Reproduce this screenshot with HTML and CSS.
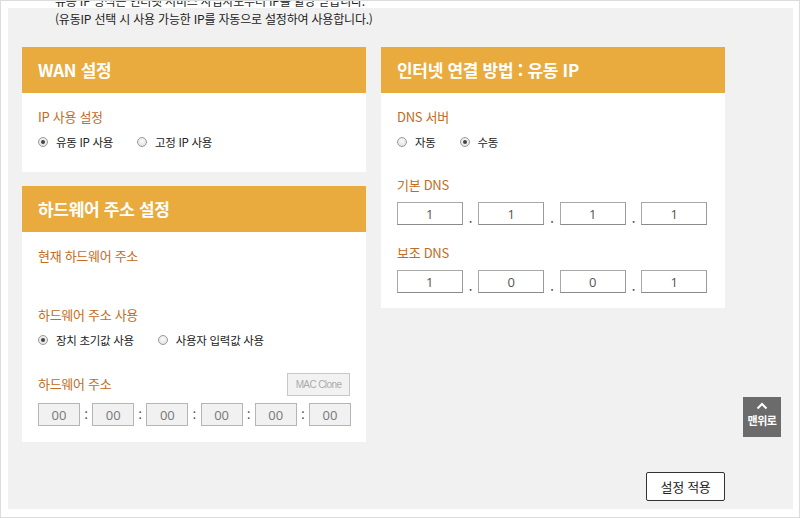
FILE: index.html
```html
<!DOCTYPE html>
<html lang="ko">
<head>
<meta charset="utf-8">
<title>WAN 설정</title>
<link rel="stylesheet" href="styles.css">
</head>
<body>
<div class="frame">
  <div class="panel">
    <p class="note note-cut">유동 IP 방식은 인터넷 서비스 사업자로부터 IP를 할당 받습니다.</p>
    <p class="note">(유동IP 선택 시 사용 가능한 IP를 자동으로 설정하여 사용합니다.)</p>

    <div class="columns">
      <div class="col">
        <section class="card">
          <h2 class="card-head">WAN 설정</h2>
          <div class="card-body">
            <div class="label">IP 사용 설정</div>
            <div class="radios">
              <span class="radio checked"></span><span class="radio-text">유동 IP 사용</span>
              <span class="radio"></span><span class="radio-text">고정 IP 사용</span>
            </div>
          </div>
        </section>

        <section class="card">
          <h2 class="card-head">하드웨어 주소 설정</h2>
          <div class="card-body">
            <div class="label">현재 하드웨어 주소</div>
            <div class="value-empty"></div>
            <div class="label">하드웨어 주소 사용</div>
            <div class="radios">
              <span class="radio checked"></span><span class="radio-text">장치 초기값 사용</span>
              <span class="radio"></span><span class="radio-text">사용자 입력값 사용</span>
            </div>
            <div class="label-row">
              <div class="label">하드웨어 주소</div>
              <span class="btn-clone">MAC Clone</span>
            </div>
            <div class="mac-row">
              <span class="mac-box">00</span><span class="sep">:</span>
              <span class="mac-box">00</span><span class="sep">:</span>
              <span class="mac-box">00</span><span class="sep">:</span>
              <span class="mac-box">00</span><span class="sep">:</span>
              <span class="mac-box">00</span><span class="sep">:</span>
              <span class="mac-box">00</span>
            </div>
          </div>
        </section>
      </div>

      <div class="col">
        <section class="card">
          <h2 class="card-head">인터넷 연결 방법 : 유동 IP</h2>
          <div class="card-body">
            <div class="label">DNS 서버</div>
            <div class="radios">
              <span class="radio"></span><span class="radio-text short">자동</span>
              <span class="radio checked"></span><span class="radio-text">수동</span>
            </div>
            <div class="label label-gap">기본 DNS</div>
            <div class="ip-row">
              <span class="ip-box">1</span><span class="dot">.</span>
              <span class="ip-box">1</span><span class="dot">.</span>
              <span class="ip-box">1</span><span class="dot">.</span>
              <span class="ip-box">1</span>
            </div>
            <div class="label label-gap2">보조 DNS</div>
            <div class="ip-row">
              <span class="ip-box">1</span><span class="dot">.</span>
              <span class="ip-box">0</span><span class="dot">.</span>
              <span class="ip-box">0</span><span class="dot">.</span>
              <span class="ip-box">1</span>
            </div>
          </div>
        </section>
      </div>
    </div>

    <div class="actions">
      <button class="btn-apply" type="button">설정 적용</button>
    </div>
  </div>

  <a class="to-top" href="#">
    <svg width="12" height="8" viewBox="0 0 12 8"><path d="M1.5 6.5 L6 2 L10.5 6.5" fill="none" stroke="#fff" stroke-width="2"/></svg>
    <span>맨위로</span>
  </a>
</div>
</body>
</html>
```

FILE: styles.css
```css
* { box-sizing: border-box; }
html, body { margin: 0; padding: 0; }
body {
  font-family: "Noto Sans CJK KR", "Noto Sans", sans-serif;
  color: #333;
  background: #fff;
}
.frame {
  position: relative;
  width: 800px;
  height: 518px;
  border: 1px solid #dcdcdc;
  padding: 7px 6px 7px 7px;
  overflow: hidden;
  background: #fff;
}
.panel {
  display: flow-root;
  background: #f1f1f1;
  height: 501px;
  padding: 0 14px;
}
.note {
  margin: 0;
  font-size: 12px;
  line-height: 16px;
  padding-left: 33px;
  letter-spacing: -0.2px;
  color: #222;
}
.note-cut {
  margin-top: -15px;
  margin-bottom: 2px;
}
.columns {
  display: flex;
  gap: 15px;
  margin-top: 20px;
  width: 703px;
  align-items: flex-start;
}
.col {
  width: 344px;
  display: flex;
  flex-direction: column;
  gap: 14px;
}
.card { background: #fff; }
.card-head {
  margin: 0;
  height: 46px;
  background: #e9ab3e;
  color: #fff;
  font-size: 17px;
  font-weight: bold;
  line-height: 46px;
  padding-left: 16px;
  letter-spacing: -0.3px;
}
.card-body {
  padding: 14px 16px 20px 16px;
}
.label {
  font-size: 13px;
  line-height: 20px;
  color: #c26b22;
  letter-spacing: -0.3px;
}
.radios {
  display: flex;
  align-items: center;
  height: 20px;
  margin-top: 5px;
  font-size: 11.5px;
  color: #222;
}
.radio {
  width: 10px;
  height: 10px;
  border-radius: 50%;
  border: 1px solid #9a9a9a;
  background: radial-gradient(circle at 50% 40%, #fafafa 0, #dcdcdc 100%);
  position: relative;
  flex: none;
  margin-right: 8px;
}
.radio.checked::after {
  content: "";
  position: absolute;
  left: 2px; top: 2px;
  width: 4px; height: 4px;
  border-radius: 50%;
  background: #444;
}
.radio-text { margin-right: 24px; letter-spacing: -0.3px; }
.radio-text.short { margin-right: 24px; }
.value-empty { height: 39px; }
.label-row {
  display: flex;
  justify-content: space-between;
  align-items: center;
  margin-top: 22px;
  height: 24px;
}
.btn-clone {
  width: 63px;
  height: 23px;
  border: 1px solid #c8c8c8;
  background: #f2f2f2;
  color: #aaa;
  font-family: "Liberation Sans", sans-serif;
  font-size: 10px;
  letter-spacing: -0.6px;
  display: flex;
  align-items: center;
  justify-content: center;
}
.mac-row {
  display: flex;
  align-items: center;
  justify-content: space-between;
  margin-top: 7px;
  width: 313px;
  margin-bottom: -4px;
}
.mac-box {
  width: 42px;
  height: 23px;
  border: 1px solid #b5b5b5;
  background: #f1f1f1;
  color: #777;
  font-family: "Open Sans", sans-serif;
  font-size: 13px;
  display: flex;
  align-items: center;
  justify-content: center;
}
.sep {
  font-size: 12px;
  color: #444;
  width: 8px;
  text-align: center;
}
.label-gap { margin-top: 23px; }
.label-gap2 { margin-top: 18px; }
.ip-row {
  display: flex;
  align-items: flex-end;
  margin-top: 7px;
  width: 310px;
  justify-content: space-between;
}
.ip-box {
  width: 66px;
  height: 23px;
  border: 1px solid #a8a8a8;
  border-bottom-color: #8a8a8a;
  border-right-color: #9a9a9a;
  background: #fff;
  color: #555;
  font-family: "Open Sans", sans-serif;
  font-size: 13px;
  display: flex;
  align-items: center;
  justify-content: center;
}
.dot {
  font-size: 13px;
  line-height: 14px;
  color: #444;
  width: 16px;
  text-align: center;
}
.card:last-child .card-body { padding-bottom: 15px; }
.col:first-child .card:last-child .card-body { padding-bottom: 20px; }
.actions {
  width: 703px;
  display: flex;
  justify-content: flex-end;
  margin-top: 30px;
}
.btn-apply {
  width: 79px;
  height: 29px;
  border: 1px solid #333;
  border-radius: 2px;
  background: #fff;
  font-family: "Noto Sans CJK KR", sans-serif;
  font-size: 13px;
  color: #222;
  padding: 0;
  letter-spacing: -0.3px;
}
.to-top {
  position: absolute;
  left: 742px;
  top: 396px;
  width: 38px;
  height: 40px;
  background: #6b6b6b;
  color: #fff;
  text-decoration: none;
  display: flex;
  flex-direction: column;
  align-items: center;
  padding-top: 5px;
  font-size: 11px;
  font-weight: bold;
  line-height: 16px;
  letter-spacing: -0.5px;
}
.to-top svg { margin-bottom: 2px; }
```
